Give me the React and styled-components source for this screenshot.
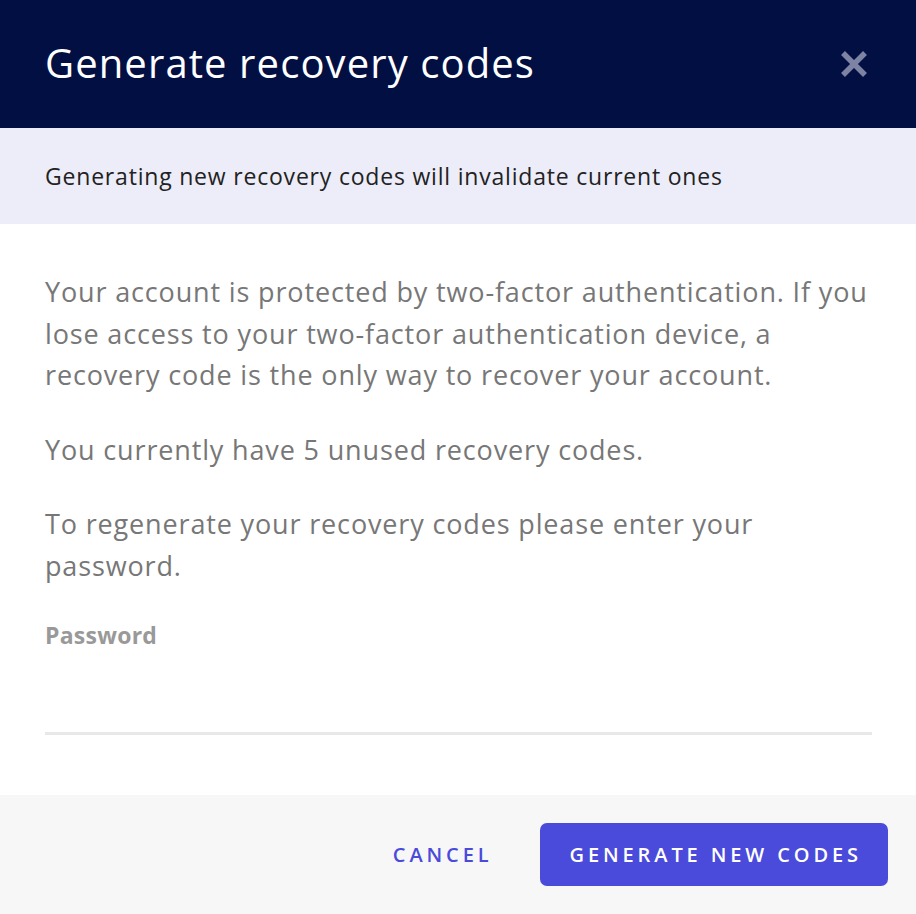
import React, { useState } from 'react';
import styled, { createGlobalStyle } from 'styled-components';

const GlobalStyle = createGlobalStyle`
  html, body {
    margin: 0;
    padding: 0;
    background: #ffffff;
  }
  body {
    font-family: "Open Sans", "Noto Sans", sans-serif;
  }
`;

const Modal = styled.div`
  width: 916px;
  height: 914px;
  display: flex;
  flex-direction: column;
  background: #fff;
`;

const Header = styled.div`
  height: 128px;
  box-sizing: border-box;
  padding: 0 46px 0 45px;
  display: flex;
  align-items: center;
  justify-content: space-between;
  background: #020f43;
`;

const Title = styled.h1`
  margin: 0 0 4px;
  font-size: 40px;
  font-weight: 500;
  color: #fff;
  letter-spacing: 1.1px;
`;

const CloseButton = styled.button`
  background: none;
  border: none;
  padding: 0;
  width: 32px;
  height: 32px;
  display: flex;
  align-items: center;
  justify-content: center;
  cursor: pointer;
`;

const Notice = styled.div`
  height: 96px;
  box-sizing: border-box;
  padding: 0 45px;
  display: flex;
  align-items: center;
  background: #ededf9;
  color: #222;
  font-size: 23px;
  letter-spacing: 0.8px;
`;

const Body = styled.div`
  flex: 1;
  padding: 47px 44px 0 45px;
`;

const Paragraph = styled.p`
  margin: 0 0 33px;
  font-size: 27px;
  line-height: 41.5px;
  color: #777;
  letter-spacing: 0.85px;
`;

const Label = styled.label`
  display: block;
  font-size: 23px;
  font-weight: 700;
  color: #999;
  letter-spacing: 0.25px;
`;

const Input = styled.input`
  display: block;
  width: 100%;
  box-sizing: border-box;
  height: 84px;
  border: none;
  border-bottom: 3px solid #e8e8e8;
  outline: none;
  font-size: 24px;
  font-family: inherit;
  background: transparent;
`;

const Footer = styled.div`
  height: 119px;
  box-sizing: border-box;
  padding: 0 28px 0 0;
  display: flex;
  align-items: center;
  justify-content: flex-end;
  gap: 48px;
  background: #f7f7f7;
`;

const Button = styled.button`
  font-family: inherit;
  font-size: 20px;
  font-weight: 600;
  letter-spacing: 3.9px;
  text-transform: uppercase;
  border: none;
  cursor: pointer;
  border-radius: 7px;
  height: 63px;
  padding: ${(p) => (p.primary ? '0 26px 0 29px' : '0')};
  background: ${(p) => (p.primary ? '#4a4adb' : 'transparent')};
  color: ${(p) => (p.primary ? '#fff' : '#4a4adb')};
`;

const App = () => {
  const [password, setPassword] = useState('');

  return (
    <Modal>
      <GlobalStyle />
      <Header>
        <Title>Generate recovery codes</Title>
        <CloseButton aria-label="Close">
          <svg width="30" height="30" viewBox="0 0 30 30">
            <path d="M4 4 L26 26 M26 4 L4 26" stroke="#7d84a3" strokeWidth="5.5" />
          </svg>
        </CloseButton>
      </Header>
      <Notice>Generating new recovery codes will invalidate current ones</Notice>
      <Body>
        <Paragraph>
          Your account is protected by two-factor authentication. If you lose access to your
          two-factor authentication device, a recovery code is the only way to recover your
          account.
        </Paragraph>
        <Paragraph>You currently have 5 unused recovery codes.</Paragraph>
        <Paragraph>To regenerate your recovery codes please enter your password.</Paragraph>
        <Label htmlFor="pw">Password</Label>
        <Input id="pw" type="password" value={password} onChange={(e) => setPassword(e.target.value)} />
      </Body>
      <Footer>
        <Button>Cancel</Button>
        <Button primary>Generate new codes</Button>
      </Footer>
    </Modal>
  );
};

export default App;
